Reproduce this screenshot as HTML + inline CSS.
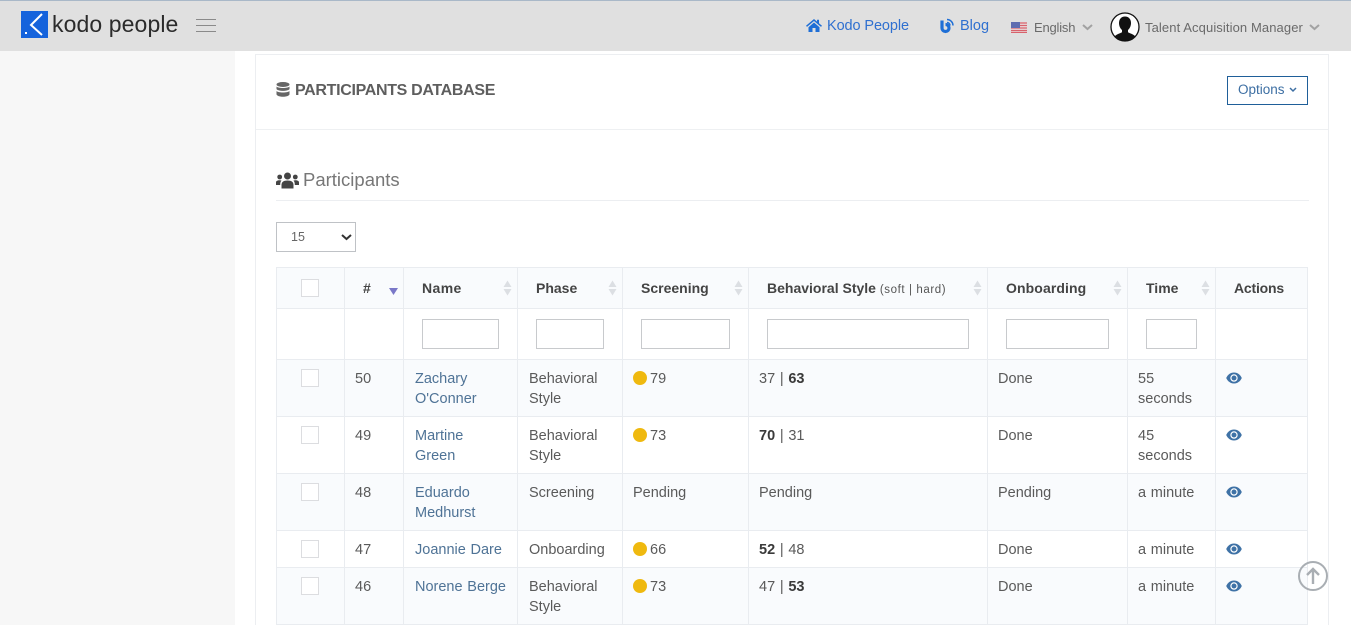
<!DOCTYPE html>
<html><head><meta charset="utf-8"><style>
*{box-sizing:border-box}
html,body{margin:0;padding:0;width:1351px;height:625px;overflow:hidden;background:#fff;font-family:"Liberation Sans",sans-serif;color:#555}
.a{position:absolute;white-space:nowrap}
.t{position:absolute;font-size:14.5px;line-height:20px;color:#5a5a5a;white-space:nowrap;margin-top:1px;word-spacing:.7px}
.l{color:#4f7396}
.h{position:absolute;font-size:14px;font-weight:bold;color:#444;line-height:20px;top:278px;white-space:nowrap}
.vl{position:absolute;top:267px;height:358px;width:1px;background:#e9ecf0}
.hl{position:absolute;left:276px;width:1032px;height:1px;background:#e9ecf0}
.in{position:absolute;top:319px;height:30px;background:#fff;border:1px solid #c8cacd}
.cb{position:absolute;left:301px;width:18px;height:18px;background:#fff;border:1px solid #dcdde0}
.dot{position:absolute;left:633px;width:14px;height:14px;border-radius:50%;background:#efb90f}
.s{position:absolute;width:9px;height:16px;top:280px}
</style></head><body>
<svg width="0" height="0" style="position:absolute"><defs>
<symbol id="srt" viewBox="0 0 9 16"><path d="M4.500 0.500L8.500 7H.5zM4.500 15.500L.5 9h8z" fill="#dcdfe3"/></symbol>
<symbol id="eye" viewBox="0 0 16 12"><path d="M8 .5C4.400.5 1.600 2.800.2 6c1.400 3.200 4.200 5.500 7.800 5.500S14.400 9.200 15.800 6C14.400 2.800 11.600.5 8 .5z" fill="#3f72a6"/><circle cx="8" cy="6" r="3.700" fill="#fff"/><circle cx="8" cy="6" r="2.500" fill="#3f72a6"/></symbol>
</defs></svg>

<div class="a" style="left:0;top:51px;width:235px;height:574px;background:#f7f7f7"></div>
<div class="a" style="left:255px;top:54px;width:1074px;height:571px;border:1px solid #eceef1;border-bottom:0;background:#fff"></div>
<div class="a" style="left:256px;top:129px;width:1072px;height:1px;background:#eef0f2"></div>

<!-- header -->
<div class="a" style="left:0;top:0;width:1351px;height:51px;background:#e0e0e0;border-top:1px solid #a9b8c8"></div>
<svg class="a" style="left:21px;top:11px" width="28" height="28" viewBox="0 0 28 28"><rect width="27" height="27" fill="#1563dc"/><path d="M21 3L10 14L21 24" fill="none" stroke="#fff" stroke-width="2"/><rect x="4" y="21" width="2" height="2" fill="#fff"/></svg>
<div class="a" style="left:52px;top:10px;font-size:23px;line-height:28px;color:#2b2b2b;letter-spacing:.1px">kodo people</div>
<svg class="a" style="left:196px;top:19px" width="20" height="14"><path d="M0 .5H20M0 6.500H20M0 12.500H20" stroke="#8a8a8a" stroke-width="1"/></svg>

<svg class="a" style="left:806px;top:19px" width="16" height="13" viewBox="0 0 16 13"><path d="M8 0L0 6.800l1 1.100L8 2l7 5.900 1-1.100-3-2.500V.8h-2v1.800zM2.500 8.200V13H6.500V9h3v4h4V8.200L8 3.500z" fill="#1f6fd6"/></svg>
<div class="a" style="left:827px;top:16px;font-size:14.500px;line-height:20px;color:#2f70d0;letter-spacing:-.1px">Kodo People</div>
<svg class="a" style="left:939px;top:18px" width="17" height="16" viewBox="0 0 17 16"><path d="M3 2.500V10a3.500 3.500 0 1 0 3.500-3.500" fill="none" stroke="#1f6fd6" stroke-width="3.200"/><path d="M8 1.500a6 6 0 0 1 6 6M8 4.500a3 3 0 0 1 3 3" fill="none" stroke="#1f6fd6" stroke-width="1.500"/></svg>
<div class="a" style="left:960px;top:16px;font-size:14.500px;line-height:20px;color:#2f70d0">Blog</div>
<svg class="a" style="left:1011px;top:22px" width="16" height="11" viewBox="0 0 16 11"><rect width="16" height="11" fill="#e9dede"/><path d="M0 1H16M0 3.500H16M0 6H16M0 8.500H16M0 10.500H16" stroke="#d8626c" stroke-width="1.300"/><rect width="9" height="6" fill="#5f6db0"/></svg>
<div class="a" style="left:1034px;top:18px;font-size:13px;line-height:20px;color:#6a6a6a;letter-spacing:-.2px">English</div>
<svg class="a" style="left:1082px;top:24px" width="11" height="7"><path d="M1 1l4.500 4L10 1" fill="none" stroke="#a2a2a2" stroke-width="2"/></svg>
<svg class="a" style="left:1110px;top:12px" width="30" height="30" viewBox="0 0 30 30"><circle cx="15" cy="15" r="14" fill="#fff" stroke="#111" stroke-width="1.300"/><path d="M15 4.500c-4 0-6 3-6 6.500 0 3 1.300 5.500 3 7v2.200C9.500 21.500 6 22.500 4.500 24.500 7 27.500 11 29 15 29s8-1.500 10.500-4.500C24 22.500 20.500 21.500 18 20.200V18c1.700-1.500 3-4 3-7 0-3.500-2-6.500-6-6.500z" fill="#111"/></svg>
<div class="a" style="left:1145px;top:18px;font-size:13px;line-height:20px;color:#6a6a6a;letter-spacing:.1px">Talent Acquisition Manager</div>
<svg class="a" style="left:1309px;top:24px" width="11" height="7"><path d="M1 1l4.500 4L10 1" fill="none" stroke="#a2a2a2" stroke-width="2"/></svg>

<!-- card head -->
<svg class="a" style="left:276px;top:82px" width="14" height="15" viewBox="0 0 14 15"><ellipse cx="7" cy="2.500" rx="6.500" ry="2.500" fill="#666"/><path d="M.5 4.500C2 6.500 12 6.500 13.500 4.500V7C12 9.500 2 9.500 .5 7zM.5 9C2 11 12 11 13.500 9v3.500C12 15.500 2 15.500 .5 12.500z" fill="#666"/></svg>
<div class="a" style="left:295px;top:80px;font-size:16px;line-height:22px;font-weight:bold;color:#5e5e5e;letter-spacing:-.32px">PARTICIPANTS DATABASE</div>
<div class="a" style="left:1227px;top:76px;width:81px;height:29px;border:1px solid #1f5f99"></div>
<div class="a" style="left:1238px;top:81px;font-size:13.500px;line-height:18px;color:#3d6fa3">Options</div>
<svg class="a" style="left:1289px;top:87px" width="8" height="6"><path d="M1 1l3 3 3-3" fill="none" stroke="#3d6fa3" stroke-width="1.500"/></svg>

<!-- section -->
<svg class="a" style="left:276px;top:172px" width="23" height="17" viewBox="0 0 23 17"><circle cx="11.500" cy="4" r="3.500" fill="#444"/><circle cx="3.700" cy="5" r="2.400" fill="#444"/><circle cx="19.300" cy="5" r="2.400" fill="#444"/><path d="M5.500 16.500v-3.500c0-3 2-4.500 6-4.500s6 1.500 6 4.500v3.500zM0 13v-2.500C0 9 1.200 8.200 3.700 8.200c.7 0 1.300.1 1.800.3-1 1-1.300 2.500-1.300 4.500zM23 13v-2.500c0-1.500-1.200-2.300-3.700-2.300-.7 0-1.300.1-1.800.3 1 1 1.300 2.500 1.300 4.500z" fill="#444"/></svg>
<div class="a" style="left:303px;top:168px;font-size:18.500px;line-height:24px;color:#777">Participants</div>
<div class="a" style="left:276px;top:200px;width:1033px;height:1px;background:#eceef1"></div>

<div class="a" style="left:276px;top:222px;width:80px;height:30px;border:1px solid #bfc2c6;background:#fff"></div>
<div class="a" style="left:291px;top:229px;font-size:12.500px;line-height:17px;color:#666">15</div>
<svg class="a" style="left:341px;top:234px" width="11" height="7"><path d="M1 1l4.500 4L10 1" fill="none" stroke="#333" stroke-width="2"/></svg>

<!-- table backgrounds -->
<div class="a" style="left:276px;top:267px;width:1032px;height:41px;background:#f9fbfd"></div>
<div class="a" style="left:276px;top:359px;width:1032px;height:57px;background:#f9fbfd"></div>
<div class="a" style="left:276px;top:473px;width:1032px;height:57px;background:#f9fbfd"></div>
<div class="a" style="left:276px;top:567px;width:1032px;height:58px;background:#f9fbfd"></div>

<div class="vl" style="left:276px"></div><div class="vl" style="left:344px"></div><div class="vl" style="left:403px"></div><div class="vl" style="left:517px"></div><div class="vl" style="left:622px"></div><div class="vl" style="left:748px"></div><div class="vl" style="left:987px"></div><div class="vl" style="left:1127px"></div><div class="vl" style="left:1215px"></div><div class="vl" style="left:1307px"></div>
<div class="hl" style="top:267px"></div><div class="hl" style="top:308px"></div><div class="hl" style="top:359px"></div><div class="hl" style="top:416px"></div><div class="hl" style="top:473px"></div><div class="hl" style="top:530px"></div><div class="hl" style="top:567px"></div><div class="hl" style="top:624px"></div>

<!-- header cells -->
<div class="cb" style="top:279px"></div>
<div class="h" style="left:363px">#</div>
<svg class="a" style="left:389px;top:288px" width="9" height="7"><path d="M0 0h9L4.500 7z" fill="#7a78c8"/></svg>
<div class="h" style="left:422px;letter-spacing:.4px">Name</div><svg class="s" style="left:503px"><use href="#srt"/></svg>
<div class="h" style="left:536px">Phase</div><svg class="s" style="left:608px"><use href="#srt"/></svg>
<div class="h" style="left:641px">Screening</div><svg class="s" style="left:734px"><use href="#srt"/></svg>
<div class="h" style="left:767px">Behavioral Style <span style="font-weight:normal;font-size:11.500px;letter-spacing:.6px;color:#555">(soft | hard)</span></div><svg class="s" style="left:973px"><use href="#srt"/></svg>
<div class="h" style="left:1006px;letter-spacing:.1px">Onboarding</div><svg class="s" style="left:1113px"><use href="#srt"/></svg>
<div class="h" style="left:1146px">Time</div><svg class="s" style="left:1201px"><use href="#srt"/></svg>
<div class="h" style="left:1234px;letter-spacing:-.2px">Actions</div>

<!-- filters -->
<div class="in" style="left:422px;width:77px"></div>
<div class="in" style="left:536px;width:68px"></div>
<div class="in" style="left:641px;width:89px"></div>
<div class="in" style="left:767px;width:202px"></div>
<div class="in" style="left:1006px;width:103px"></div>
<div class="in" style="left:1146px;width:51px"></div>

<!-- row 50 -->
<div class="cb" style="top:369px"></div>
<div class="t" style="left:355px;top:368px">50</div>
<div class="t l" style="left:415px;top:368px">Zachary<br>O'Conner</div>
<div class="t" style="left:529px;top:368px">Behavioral<br>Style</div>
<div class="dot" style="top:371px"></div><div class="t" style="left:650px;top:368px">79</div>
<div class="t" style="left:759px;top:368px">37 | <b style="color:#3a3a3a">63</b></div>
<div class="t" style="left:998px;top:368px">Done</div>
<div class="t" style="left:1138px;top:368px">55<br>seconds</div>
<svg class="a" style="left:1226px;top:372px" width="16" height="12"><use href="#eye"/></svg>

<!-- row 49 -->
<div class="cb" style="top:426px"></div>
<div class="t" style="left:355px;top:425px">49</div>
<div class="t l" style="left:415px;top:425px">Martine<br>Green</div>
<div class="t" style="left:529px;top:425px">Behavioral<br>Style</div>
<div class="dot" style="top:428px"></div><div class="t" style="left:650px;top:425px">73</div>
<div class="t" style="left:759px;top:425px"><b style="color:#3a3a3a">70</b> | 31</div>
<div class="t" style="left:998px;top:425px">Done</div>
<div class="t" style="left:1138px;top:425px">45<br>seconds</div>
<svg class="a" style="left:1226px;top:429px" width="16" height="12"><use href="#eye"/></svg>

<!-- row 48 -->
<div class="cb" style="top:483px"></div>
<div class="t" style="left:355px;top:482px">48</div>
<div class="t l" style="left:415px;top:482px">Eduardo<br>Medhurst</div>
<div class="t" style="left:529px;top:482px">Screening</div>
<div class="t" style="left:633px;top:482px">Pending</div>
<div class="t" style="left:759px;top:482px">Pending</div>
<div class="t" style="left:998px;top:482px">Pending</div>
<div class="t" style="left:1138px;top:482px">a minute</div>
<svg class="a" style="left:1226px;top:486px" width="16" height="12"><use href="#eye"/></svg>

<!-- row 47 -->
<div class="cb" style="top:540px"></div>
<div class="t" style="left:355px;top:539px">47</div>
<div class="t l" style="left:415px;top:539px">Joannie Dare</div>
<div class="t" style="left:529px;top:539px">Onboarding</div>
<div class="dot" style="top:542px"></div><div class="t" style="left:650px;top:539px">66</div>
<div class="t" style="left:759px;top:539px"><b style="color:#3a3a3a">52</b> | 48</div>
<div class="t" style="left:998px;top:539px">Done</div>
<div class="t" style="left:1138px;top:539px">a minute</div>
<svg class="a" style="left:1226px;top:543px" width="16" height="12"><use href="#eye"/></svg>

<!-- row 46 -->
<div class="cb" style="top:577px"></div>
<div class="t" style="left:355px;top:576px">46</div>
<div class="t l" style="left:415px;top:576px">Norene Berge</div>
<div class="t" style="left:529px;top:576px">Behavioral<br>Style</div>
<div class="dot" style="top:579px"></div><div class="t" style="left:650px;top:576px">73</div>
<div class="t" style="left:759px;top:576px">47 | <b style="color:#3a3a3a">53</b></div>
<div class="t" style="left:998px;top:576px">Done</div>
<div class="t" style="left:1138px;top:576px">a minute</div>
<svg class="a" style="left:1226px;top:580px" width="16" height="12"><use href="#eye"/></svg>

<!-- scroll top -->
<svg class="a" style="left:1298px;top:561px" width="30" height="30" viewBox="0 0 30 30"><circle cx="15" cy="15" r="14" fill="none" stroke="#a9aeb3" stroke-width="2"/><path d="M15 23V8M9 14l6-6 6 6" fill="none" stroke="#a9aeb3" stroke-width="2.400"/></svg>
</body></html>
